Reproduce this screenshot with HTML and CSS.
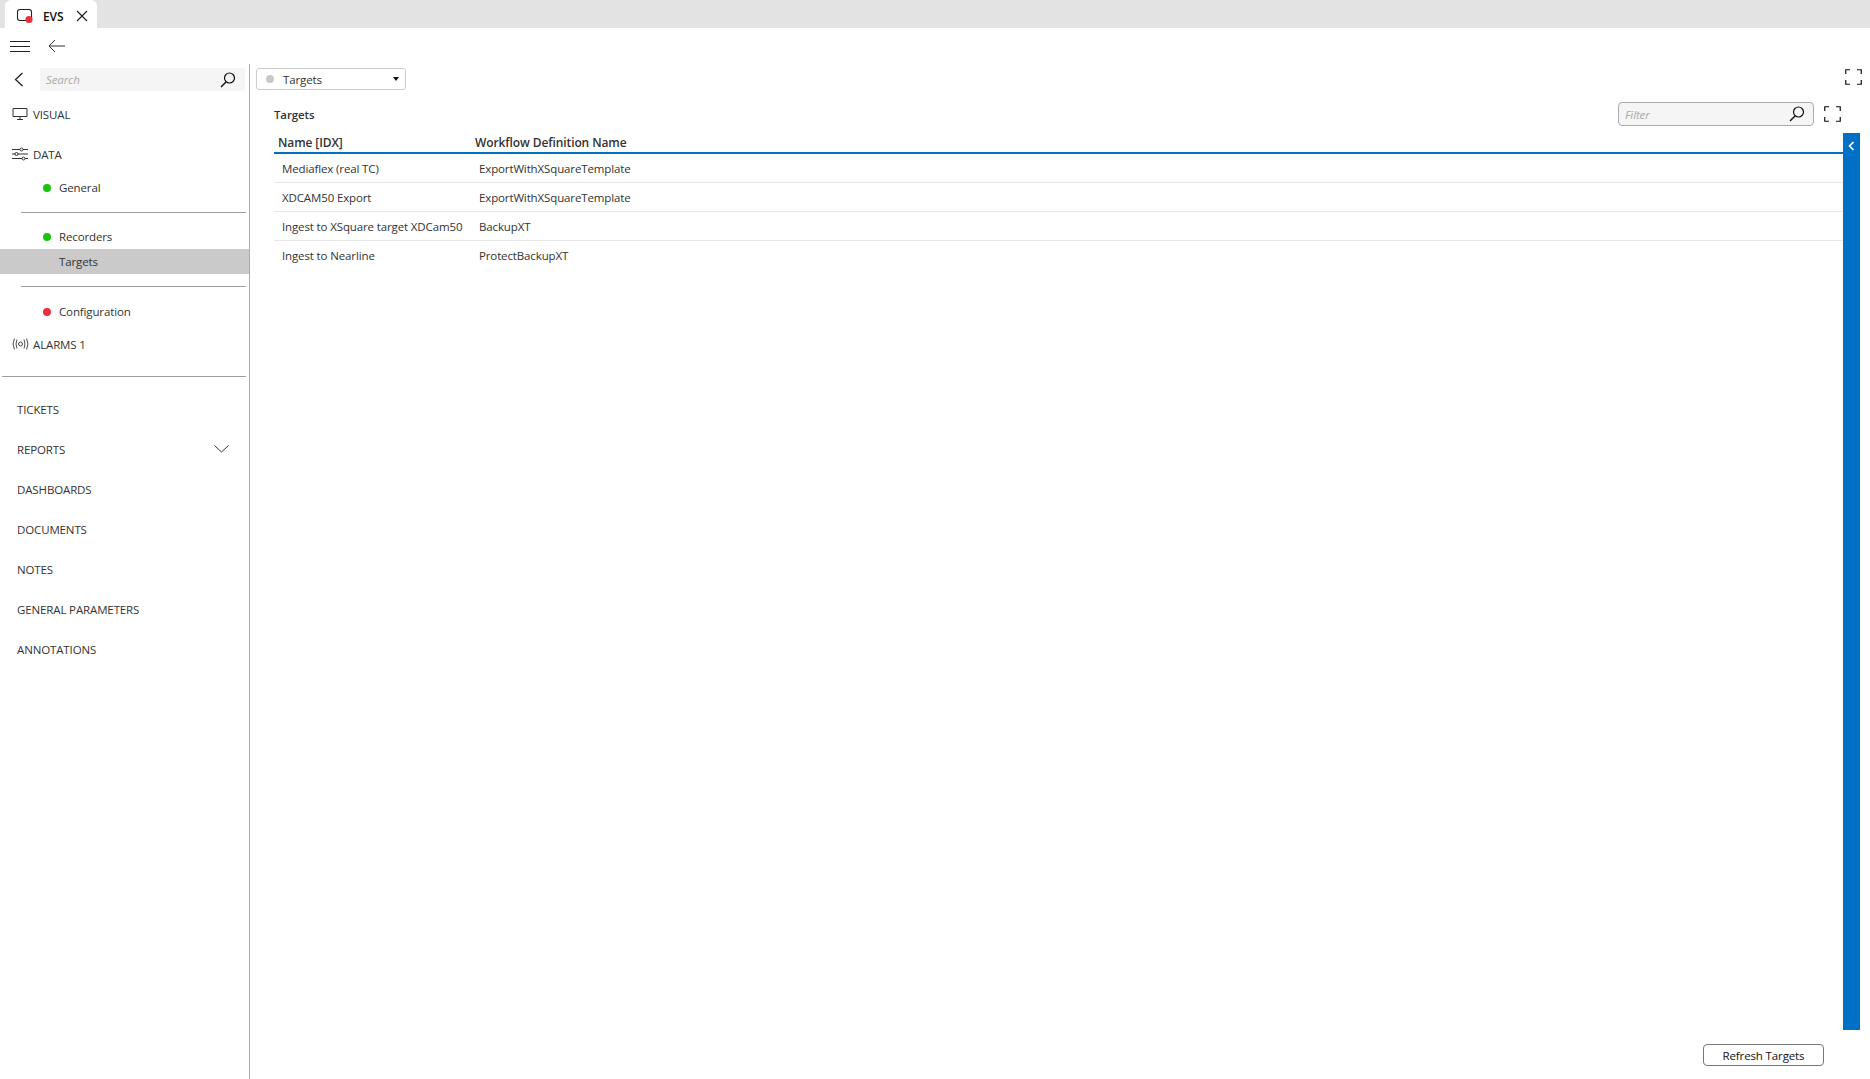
FILE: index.html
```html
<!DOCTYPE html>
<html lang="en">
<head>
    <meta charset="UTF-8">
    <title>EVS</title>
    <link rel="stylesheet" href="styles.css">
</head>
<body>
    <div class="tabbar">
        <div class="tab">
            <svg class="tab-icon" width="20" height="16" viewBox="0 0 20 16">
                <rect x="1.5" y="1.5" width="14" height="11" rx="2.5" fill="none" stroke="#222" stroke-width="1.1"/>
                <circle cx="13" cy="11.5" r="3.6" fill="#e8303a"/>
            </svg>
            <span class="tab-title">EVS</span>
            <svg class="tab-close" width="12" height="12" viewBox="0 0 12 12">
                <path d="M1 1 L11 11 M11 1 L1 11" stroke="#222" stroke-width="1.2"/>
            </svg>
        </div>
    </div>
    <div class="toolbar">
        <svg width="20" height="13" viewBox="0 0 20 13">
            <path d="M0 1.5 H20 M0 6.5 H20 M0 11.5 H20" stroke="#222" stroke-width="1"/>
        </svg>
        <svg class="toolbar-back" width="17" height="14" viewBox="0 0 17 14">
            <path d="M17 7 H1 M7 1 L1 7 L7 13" fill="none" stroke="#333" stroke-width="1"/>
        </svg>
    </div>
    <div class="layout">
        <div class="sidebar">
            <div class="search-row">
                <svg width="10" height="15" viewBox="0 0 10 15">
                    <path d="M8.5 1 L1.5 7.5 L8.5 14" fill="none" stroke="#222" stroke-width="1.3"/>
                </svg>
                <div class="search-box">
                    <span class="placeholder">Search</span>
                    <svg width="16" height="16" viewBox="0 0 16 16">
                        <circle cx="9.5" cy="6" r="5" fill="none" stroke="#111" stroke-width="1.2"/>
                        <path d="M6 10 L1 15" stroke="#111" stroke-width="1.4"/>
                    </svg>
                </div>
            </div>

            <div class="nav-main nav-visual">
                <svg width="16" height="12" viewBox="0 0 16 12">
                    <path d="M1 .5 H15 V8.5 H1 Z M5 11.5 H11 M8 9 V11.5" fill="none" stroke="#333" stroke-width="1"/>
                </svg>
                <span>VISUAL</span>
            </div>
            <div class="nav-main nav-data">
                <svg width="16" height="14" viewBox="0 0 16 14">
                    <path d="M0 2.5 H8 M11 2.5 H16 M0 7 H3 M6 7 H16 M0 11.5 H10 M13 11.5 H16" stroke="#333" stroke-width="1"/>
                    <circle cx="9.5" cy="2.5" r="1.5" fill="none" stroke="#333"/>
                    <circle cx="4.5" cy="7" r="1.5" fill="none" stroke="#333"/>
                    <circle cx="11.5" cy="11.5" r="1.5" fill="none" stroke="#333"/>
                </svg>
                <span>DATA</span>
            </div>

            <div class="nav-sub nav-general"><i class="dot green"></i>General</div>
            <div class="divider sub-divider"></div>
            <div class="nav-sub nav-recorders"><i class="dot green"></i>Recorders</div>
            <div class="nav-sub active"><i class="dot"></i>Targets</div>
            <div class="divider sub-divider"></div>
            <div class="nav-sub nav-config"><i class="dot red"></i>Configuration</div>

            <div class="nav-main nav-alarms">
                <svg width="17" height="12" viewBox="0 0 17 12">
                    <circle cx="8.5" cy="6" r="2" fill="none" stroke="#333" stroke-width=".9"/>
                    <path d="M5 1.5 Q3 6 5 10.5 M12 1.5 Q14 6 12 10.5 M2.5 .5 Q-.5 6 2.5 11.5 M14.5 .5 Q17.5 6 14.5 11.5" fill="none" stroke="#333" stroke-width=".9"/>
                </svg>
                <span>ALARMS 1</span>
            </div>
            <div class="divider main-divider"></div>

            <div class="nav-link">TICKETS</div>
            <div class="nav-link">
                REPORTS
                <svg width="15" height="8" viewBox="0 0 15 8">
                    <path d="M.5 .5 L7.5 7 L14.5 .5" fill="none" stroke="#333" stroke-width="1"/>
                </svg>
            </div>
            <div class="nav-link">DASHBOARDS</div>
            <div class="nav-link">DOCUMENTS</div>
            <div class="nav-link">NOTES</div>
            <div class="nav-link">GENERAL PARAMETERS</div>
            <div class="nav-link">ANNOTATIONS</div>
        </div>

        <div class="main">
            <div class="main-top">
                <div class="combo">
                    <i class="dot grey"></i>
                    <span>Targets</span>
                    <b class="caret"></b>
                </div>
                <svg class="expand expand-top" width="17" height="16" viewBox="0 0 17 16">
                    <path d="M.75 5 V.75 H5 M12 .75 H16.25 V5 M16.25 11 V15.25 H12 M5 15.25 H.75 V11" fill="none" stroke="#111" stroke-width="1.2"/>
                </svg>
            </div>

            <div class="section-head">
                <span class="section-title">Targets</span>
                <div class="filter">
                    <span class="placeholder">Filter</span>
                    <svg width="16" height="16" viewBox="0 0 16 16">
                        <circle cx="9.5" cy="6" r="5" fill="none" stroke="#111" stroke-width="1.2"/>
                        <path d="M6 10 L1 15" stroke="#111" stroke-width="1.4"/>
                    </svg>
                </div>
                <svg class="expand" width="17" height="16" viewBox="0 0 17 16">
                    <path d="M.75 5 V.75 H5 M12 .75 H16.25 V5 M16.25 11 V15.25 H12 M5 15.25 H.75 V11" fill="none" stroke="#111" stroke-width="1.2"/>
                </svg>
            </div>

            <div class="content">
                <table class="grid">
                    <thead>
                        <tr><th>Name [IDX]</th><th>Workflow Definition Name</th></tr>
                    </thead>
                    <tbody>
                        <tr><td>Mediaflex (real TC)</td><td>ExportWithXSquareTemplate</td></tr>
                        <tr><td>XDCAM50 Export</td><td>ExportWithXSquareTemplate</td></tr>
                        <tr><td>Ingest to XSquare target XDCam50</td><td>BackupXT</td></tr>
                        <tr><td>Ingest to Nearline</td><td>ProtectBackupXT</td></tr>
                    </tbody>
                </table>
                <div class="side-panel">
                    <svg width="7" height="10" viewBox="0 0 7 10">
                        <path d="M5.5 1 L1.5 5 L5.5 9" fill="none" stroke="#fff" stroke-width="1.6"/>
                    </svg>
                </div>
            </div>

            <div class="footer">
                <button class="refresh">Refresh Targets</button>
            </div>
        </div>
    </div>
</body>
</html>
```

FILE: styles.css
```css
* {
    box-sizing: border-box;
}
html, body {
    height: 100%;
}
body {
    margin: 0;
    font-family: "Open Sans", "Noto Sans", sans-serif;
    font-size: 11.5px;
    letter-spacing: -0.13px;
    color: #333;
    background: #fff;
    overflow: hidden;
    display: flex;
    flex-direction: column;
}
svg {
    display: block;
    flex: none;
}

/* window chrome */
.tabbar {
    height: 28px;
    flex: none;
    background: #e3e3e3;
    padding-left: 5px;
}
.tab {
    width: 92px;
    height: 28px;
    background: #fff;
    border-radius: 6px 6px 0 0;
    display: flex;
    align-items: center;
    padding: 4px 0 0 11px;
}
.tab-title {
    margin-left: 7px;
    font-size: 12px;
    font-weight: 600;
    color: #111;
}
.tab-close {
    margin-left: 13px;
}
.toolbar {
    height: 36px;
    flex: none;
    display: flex;
    align-items: center;
    padding: 0 0 0 10px;
}
.toolbar-back {
    margin-left: 18px;
}

.layout {
    flex: 1;
    display: flex;
    min-height: 0;
}

/* left navigation */
.sidebar {
    width: 250px;
    flex: none;
    border-right: 1px solid #aaa;
    padding-top: 4px;
}
.search-row {
    height: 23px;
    display: flex;
    align-items: center;
    padding-left: 14px;
    margin-bottom: 13px;
}
.search-box {
    width: 205px;
    height: 23px;
    margin-left: 16px;
    background: #f5f5f5;
    border-radius: 3px;
    display: flex;
    align-items: center;
    justify-content: space-between;
    padding: 0 9px 0 6px;
}
.placeholder {
    font-style: italic;
    color: #aaa;
}
.nav-main {
    display: flex;
    align-items: center;
    gap: 5px;
    padding-left: 12px;
    height: 20px;
}
.nav-data {
    margin-top: 20px;
}
.nav-alarms {
    margin-top: 10px;
    gap: 4px;
}
.nav-sub {
    height: 25px;
    display: flex;
    align-items: center;
    padding-left: 43px;
    margin-right: 1px;
}
.nav-general {
    margin-top: 11px;
}
.nav-recorders {
    margin-top: 11px;
}
.nav-config {
    margin-top: 12px;
}
.nav-sub.active {
    background: #cacaca;
    margin-right: 0;
}
.dot {
    width: 8px;
    height: 8px;
    border-radius: 50%;
    flex: none;
    margin-right: 8px;
}
.dot.green {
    background: #16c60c;
}
.dot.red {
    background: #e8313f;
}
.dot.grey {
    background: #c8c8c8;
}
.divider {
    height: 1px;
    background: #a0a0a0;
}
.sub-divider {
    margin: 12px 3px 0 21px;
}
.main-divider {
    margin: 22px 3px 12px 2px;
}
.nav-link {
    height: 40px;
    display: flex;
    align-items: center;
    justify-content: space-between;
    padding: 0 20px 0 17px;
}

/* main pane */
.main {
    flex: 1;
    min-width: 0;
    display: flex;
    flex-direction: column;
    padding-top: 4px;
}
.main-top {
    height: 22px;
    display: flex;
    align-items: center;
    justify-content: space-between;
    padding: 0 8px 0 6px;
}
.expand-top {
    margin-top: -4px;
}
.combo {
    width: 150px;
    height: 22px;
    border: 1px solid #ccc;
    border-radius: 3px;
    display: flex;
    align-items: center;
    padding: 0 6px 0 9px;
}
.combo .dot {
    margin-right: 9px;
}
.caret {
    margin-left: auto;
    width: 0;
    height: 0;
    border-left: 3.5px solid transparent;
    border-right: 3.5px solid transparent;
    border-top: 4px solid #111;
}
.section-head {
    height: 24px;
    margin-top: 12px;
    display: flex;
    align-items: center;
    padding: 0 29px 0 24px;
}
.section-title {
    font-weight: 600;
    margin-right: auto;
}
.filter {
    width: 196px;
    height: 24px;
    background: #f5f5f5;
    border: 1px solid #aaa;
    border-radius: 4px;
    display: flex;
    align-items: center;
    justify-content: space-between;
    padding: 0 8px 0 6px;
    margin-right: 10px;
}
.content {
    flex: 1;
    min-height: 0;
    margin-top: 7px;
    display: flex;
    padding: 0 10px 0 24px;
}
.grid {
    flex: 1;
    width: 100%;
    min-width: 0;
    align-self: flex-start;
    border-collapse: collapse;
    table-layout: fixed;
}
.grid th:first-child {
    width: 197px;
}
.grid th {
    height: 20px;
    padding: 0 0 0 4px;
    text-align: left;
    font-size: 12px;
    font-weight: 600;
    letter-spacing: -0.1px;
    border-bottom: 2px solid #0070c5;
}
.grid td {
    height: 29px;
    padding: 2px 0 0 8px;
    white-space: nowrap;
    border-bottom: 1px solid #e8e8e8;
}
.grid tr:last-child td {
    border-bottom: 0;
}
.side-panel {
    width: 17px;
    flex: none;
    background: #0070c5;
    padding: 8px 0 0 5px;
}
.footer {
    flex: none;
    display: flex;
    justify-content: flex-end;
    padding: 14px 46px 13px 0;
}
.refresh {
    width: 121px;
    height: 22px;
    background: #fff;
    border: 1px solid #777;
    border-radius: 4px;
    font-family: inherit;
    font-size: 11.5px;
    letter-spacing: -0.13px;
    color: #111;
    padding: 0;
}
```
